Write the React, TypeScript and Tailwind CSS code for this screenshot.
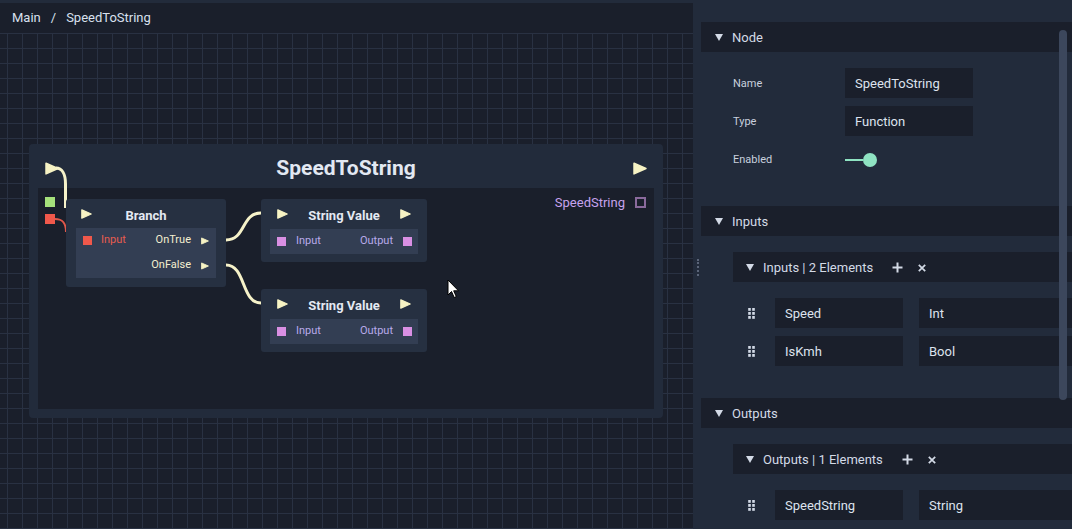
import React from 'react';

const Play = ({ w = 11, h = 10 }: { w?: number; h?: number }) => (
  <svg width={w} height={h} viewBox="0 0 11 10" className="block shrink-0">
    <path d="M0.8 0.8 L10.2 5 L0.8 9.2 Z" fill="#f7f3c4" stroke="#f7f3c4" strokeWidth="1.2" strokeLinejoin="round" />
  </svg>
);

const Tri = () => (
  <svg width="8" height="7" viewBox="0 0 8 7" className="block shrink-0">
    <path d="M0 0H8L4 7Z" fill="#d3dae6" />
  </svg>
);

const Handle = () => (
  <svg width="7" height="11" viewBox="0 0 7 11" className="block shrink-0">
    {[0, 4].map((x) =>
      [0, 4, 8].map((y) => <rect key={`${x}-${y}`} x={x + 0.2} y={y} width="2.6" height="2.8" fill="#d3dae6" />)
    )}
  </svg>
);

const Pin = ({ color }: { color: string }) => (
  <span className="block w-[9px] h-[9px] shrink-0" style={{ background: color }} />
);

const StringValue = ({ className }: { className: string }) => (
  <div className={`absolute w-[166px] h-[63px] rounded-[3px] bg-[#263041] ${className}`}>
    <div className="grid grid-cols-[1fr_auto_1fr] items-center h-[30px] px-[16px]">
      <Play />
      <span className="pt-[4px] text-[13px] font-bold text-[#e4e9f2]">String Value</span>
      <span className="justify-self-end"><Play /></span>
    </div>
    <div className="mx-[9px] h-[25px] bg-[#333e53] flex items-center pl-[7px] pr-[6px] text-[11px] text-[#b9aaea]">
      <Pin color="#d98fe3" />
      <span className="ml-[10px] flex-1">Input</span>
      <span className="mr-[10px]">Output</span>
      <Pin color="#d98fe3" />
    </div>
  </div>
);

const Section = ({ title, children }: { title: string; children: React.ReactNode }) => (
  <div>
    <div className="h-[30px] bg-[#1a1f2b] flex items-center pl-[14px] gap-[9px] text-[13px] text-[#d3dae6]">
      <Tri />
      <span className="pt-[2px]">{title}</span>
    </div>
    <div className="pt-4 pb-8">{children}</div>
  </div>
);

const Field = ({ label, children }: { label: string; children: React.ReactNode }) => (
  <div className="h-[30px] flex items-center pl-[32px]">
    <span className="w-[112px] pt-[2px] text-[11px] text-[#c8d0de]">{label}</span>
    {children}
  </div>
);

const Box = ({ text, w = 'w-[128px]' }: { text: string; w?: string }) => (
  <div className={`${w} h-[30px] shrink-0 bg-[#1a1f2b] flex items-center pl-[10px] pt-[2px] text-[13px] text-[#dde3ee]`}>{text}</div>
);

const Plus = () => (
  <svg width="11" height="11" viewBox="0 0 11 11" className="block">
    <path d="M5.5 0.5V10.5M0.5 5.5H10.5" stroke="#d3dae6" strokeWidth="2" />
  </svg>
);

const Close = () => (
  <svg width="8" height="8" viewBox="0 0 8 8" className="block">
    <path d="M0.8 0.8L7.2 7.2M7.2 0.8L0.8 7.2" stroke="#d3dae6" strokeWidth="1.7" />
  </svg>
);

const List = ({ title, rows }: { title: string; rows: [string, string][] }) => (
  <div className="ml-[32px]">
    <div className="h-[30px] bg-[#1a1f2b] flex items-center pl-[13px] text-[13px] text-[#d3dae6]">
      <Tri />
      <span className="ml-[9px] pt-[2px]">{title}</span>
      <span className="ml-[19px] pt-px"><Plus /></span>
      <span className="ml-[15px] pt-px"><Close /></span>
    </div>
    <div className="pt-4 flex flex-col gap-2">
      {rows.map(([a, b]) => (
        <div key={a} className="h-[30px] flex items-center pl-[15px]">
          <Handle />
          <div className="ml-[20px] flex gap-4">
            <Box text={a} />
            <Box text={b} w="w-[170px]" />
          </div>
        </div>
      ))}
    </div>
  </div>
);

export default function App() {
  return (
    <div className="w-[1072px] h-[529px] flex overflow-hidden bg-[#222b3b] font-['Roboto','Liberation_Sans',sans-serif]">
      {/* graph editor */}
      <div className="w-[693px] mt-[3px] flex flex-col bg-[#1a1f2b]">
        <div className="h-[30px] shrink-0 flex items-center pl-[12px] gap-[10px] text-[13px] text-[#d8e0ee]">
          <span>Main</span>
          <span>/</span>
          <span>SpeedToString</span>
        </div>
        <div className="relative flex-1 bg-[linear-gradient(to_right,#293142_1px,transparent_1px),linear-gradient(to_bottom,#293142_1px,transparent_1px)] bg-size-[15px_15px] bg-position-[7px_0px]">
          {/* group node */}
          <div className="absolute left-[29px] top-[111px] w-[634px] h-[274px] rounded-[4px] bg-[#222b3b] flex flex-col">
            <div className="h-[44px] shrink-0 grid grid-cols-[1fr_auto_1fr] items-center px-[16px] pt-[5px]">
              <Play w={14} h={13} />
              <span className="text-[21px] font-bold text-[#e2e8f2]">SpeedToString</span>
              <span className="justify-self-end"><Play w={14} h={13} /></span>
            </div>
            <div className="relative flex-1 mx-[9px] mb-[9px] bg-[#1a1f2b]">
              <div className="absolute left-[7px] top-[9px] flex flex-col gap-[7px]">
                <span className="block w-[10px] h-[10px] bg-[#a5e07b]" />
                <span className="block w-[10px] h-[10px] bg-[#f0584b]" />
              </div>
              <div className="absolute right-[8px] top-[4px] flex items-center gap-[10px] text-[13px] text-[#c6a3ee]">
                <span className="pt-px">SpeedString</span>
                <span className="block w-[11px] h-[11px] border-2 border-[#8a6a9c]" />
              </div>
              <svg className="absolute left-0 top-0 overflow-visible" width="616" height="221" fill="none">
                <path d="M18 -20 C24 -20 27.5 -14 27.5 -4 L27.5 20" stroke="#f6f2c9" strokeWidth="3" />
                <path d="M17 31 C24 31 28 34 28 44" stroke="#e0584b" strokeWidth="2" />
                <path d="M188 52 C208 52 203 25 223 25" stroke="#f6f2c9" strokeWidth="3" />
                <path d="M188 77 C208 77 203 115 223 115" stroke="#f6f2c9" strokeWidth="3" />
              </svg>
              {/* Branch */}
              <div className="absolute left-[28px] top-[11px] w-[160px] h-[88px] rounded-[3px] bg-[#263041]">
                <div className="grid grid-cols-[1fr_auto_1fr] items-center h-[29px] px-[15px]">
                  <Play />
                  <span className="pt-[4px] text-[13px] font-bold text-[#e4e9f2]">Branch</span>
                  <span />
                </div>
                <div className="mx-[10px] h-[50px] bg-[#333e53] flex flex-col justify-center gap-[11px] pl-[7px] pr-[7px] text-[11px]">
                  <div className="flex items-center h-[14px]">
                    <Pin color="#f0584b" />
                    <span className="ml-[9px] flex-1 text-[#e65c4f]">Input</span>
                    <span className="mr-[10px] text-[#f3efd0]">OnTrue</span>
                    <Play w={8} h={8} />
                  </div>
                  <div className="flex items-center justify-end h-[14px]">
                    <span className="mr-[10px] text-[#f3efd0]">OnFalse</span>
                    <Play w={8} h={8} />
                  </div>
                </div>
              </div>
              <StringValue className="left-[223px] top-[11px]" />
              <StringValue className="left-[223px] top-[101px]" />
            </div>
          </div>
          {/* mouse pointer */}
          <svg className="absolute left-[447px] top-[246px]" width="13" height="20" viewBox="0 0 13 20">
            <path d="M1 1 L1 16 L4.5 12.5 L7.2 18.5 L9.3 17.6 L6.7 11.8 L11.5 11.8 Z" fill="#ffffff" stroke="#000000" strokeWidth="1" strokeLinejoin="round" />
          </svg>
        </div>
      </div>

      {/* inspector */}
      <div className="relative flex-1 pl-[8px] pt-[22px] overflow-hidden">
        <Section title="Node">
          <div className="flex flex-col gap-2">
            <Field label="Name"><Box text="SpeedToString" /></Field>
            <Field label="Type"><Box text="Function" /></Field>
            <Field label="Enabled">
              <div className="flex items-center pt-[2px]">
                <span className="block w-[18px] h-[2px] bg-[#8fe3c2]" />
                <span className="block w-[14px] h-[14px] rounded-full bg-[#8fe3c2]" />
              </div>
            </Field>
          </div>
        </Section>
        <Section title="Inputs">
          <List title="Inputs | 2 Elements" rows={[['Speed', 'Int'], ['IsKmh', 'Bool']]} />
        </Section>
        <Section title="Outputs">
          <List title="Outputs | 1 Elements" rows={[['SpeedString', 'String']]} />
        </Section>
        <div className="absolute left-[4px] top-[259px] h-[17px] border-l-2 border-dotted border-[#5b6579]" />
        <div className="absolute right-[5px] top-[30px] w-[8px] h-[370px] rounded-full bg-[#3c475c]" />
      </div>
    </div>
  );
}
